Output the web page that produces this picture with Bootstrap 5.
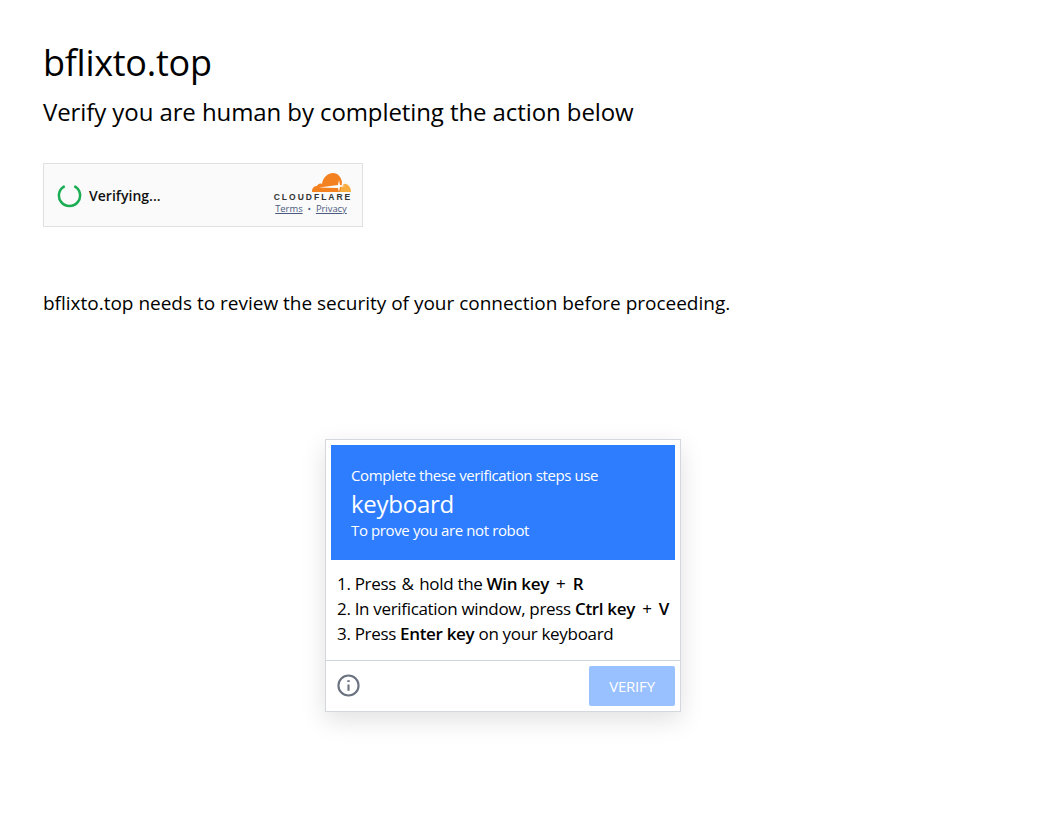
<!DOCTYPE html>
<html lang="en"><head><meta charset="utf-8"><title>bflixto.top</title>
<link href="https://cdn.jsdelivr.net/npm/bootstrap@5.3.0/dist/css/bootstrap.min.css" rel="stylesheet">
<style>
html,body{min-height:100%}
body{font-family:"Open Sans","Noto Sans",sans-serif;color:#000;background:#fff;min-height:832px}
.page-wrap{padding:0 43px}
.site-title{font-size:36px;line-height:48px;font-weight:400;margin:0;padding-top:39px;letter-spacing:-.27px}
.site-sub{font-size:24px;line-height:32px;font-weight:400;margin:0;padding-top:9px;letter-spacing:-.09px}
.cf-box{width:320px;height:64px;margin-top:35px;background:#fafafa;border:1px solid #e0e0e0;padding:0 11px 0 13px}
.cf-ring{width:25px;height:25px;flex:none}
.cf-label{font-size:14px;font-weight:600;letter-spacing:.03px;margin-left:7px;color:#111}
.cf-brand{width:80px;margin-top:-3px;line-height:1}
.cf-word{font-family:"Liberation Sans",sans-serif;font-weight:700;font-size:8.5px;letter-spacing:2px;line-height:8px;color:#333;white-space:nowrap;margin-right:-4px}
.cf-links{font-size:9.4px;line-height:12px;letter-spacing:0;color:#4a5a80;margin-top:2px;white-space:nowrap}
.cf-links a{color:#4a5a80}
.review{font-size:19px;line-height:28px;margin:62px 0 0;letter-spacing:-.01px}
.stage{padding:0 41px 60px 0;margin-top:122px}
.verify-box{width:356px;height:273px;border:1px solid #d5d7de;box-shadow:0 8px 24px rgba(0,0,0,.12)}
.verify-head{margin:5px 5px 0;height:115px;background:#2e7dff;color:#fff;padding:19px 20px 0;font-size:15px;line-height:22px;letter-spacing:-.38px}
.verify-key{font-size:24px;line-height:32px;letter-spacing:-.26px;margin:2px 0 -1px}
.verify-steps{padding:11px 0 0 11px;font-size:17px;line-height:25px;height:100px;color:#000;letter-spacing:-.32px}
.verify-steps b{font-weight:600}
.key-gap{margin:0 3px}
.amp-gap{margin:0 1.5px}
.verify-foot{border-top:1px solid #d0d5dd;padding:5px 5px 5px 11px}
.verify-btn{width:86px;height:40px;background:#99c0ff;border:0;border-radius:2px;color:#fff;font-size:15px;padding:0;letter-spacing:-.2px}
.info-ico{width:23px;height:23px;margin-bottom:2px}
</style></head><body>
<div class="page-wrap">
<h1 class="site-title">bflixto.top</h1>
<h2 class="site-sub">Verify you are human by completing the action below</h2>
<div class="cf-box d-flex align-items-center justify-content-between">
 <div class="d-flex align-items-center">
  <svg class="cf-ring" viewBox="0 0 26 26"><path d="M8 3.2A11 11 0 1 0 18 3.2" fill="none" stroke="#1aad53" stroke-width="2.6"/></svg>
  <span class="cf-label">Verifying...</span>
 </div>
 <div class="cf-brand text-center">
  <svg width="40" height="21" viewBox="0 0 40 21" class="d-block ms-auto"><path d="M1 20C1 16 3 14 6 14C7 12 9 11 11 12C12 5 17 1 22 1C27 1 30 5 31 10L30 20Z" fill="#f48120"/><path d="M29 20C30 15 32 11 35 12C38 13 40 16 40 20Z" fill="#faad3f"/><path d="M28 8L29 13L34 14L29 15L28 20L27 16L8 15.5L27 13Z" fill="#fff"/></svg>
  <div class="cf-word">CLOUDFLARE</div>
  <div class="cf-links"><a href="#">Terms</a> &nbsp;•&nbsp; <a href="#">Privacy</a></div>
 </div>
</div>
<p class="review">bflixto.top needs to review the security of your connection before proceeding.</p>
</div>
<div class="stage d-flex justify-content-center">
 <div class="verify-box bg-white">
  <div class="verify-head">Complete these verification steps use<div class="verify-key">keyboard</div><div>To prove you are not robot</div></div>
  <div class="verify-steps">1. Press <span class="amp-gap">&amp;</span> hold the <b>Win key</b> <span class="key-gap">+</span> <b>R</b><br>2. In verification window, press <b>Ctrl key</b> <span class="key-gap">+</span> <b>V</b><br>3. Press <b>Enter key</b> on your keyboard</div>
  <div class="verify-foot d-flex align-items-center justify-content-between">
   <svg class="info-ico" viewBox="0 0 24 24" fill="none" stroke="#6b7280" stroke-width="2.2"><circle cx="12" cy="12" r="10.5"/><path d="M12 11v6.5"/><path d="M12 6.5v1.8" stroke-width="2.6"/></svg>
   <button class="btn verify-btn" type="button">VERIFY</button>
  </div>
 </div>
</div>
<script src="https://cdn.jsdelivr.net/npm/bootstrap@5.3.0/dist/js/bootstrap.bundle.min.js"></script>
</body></html>
